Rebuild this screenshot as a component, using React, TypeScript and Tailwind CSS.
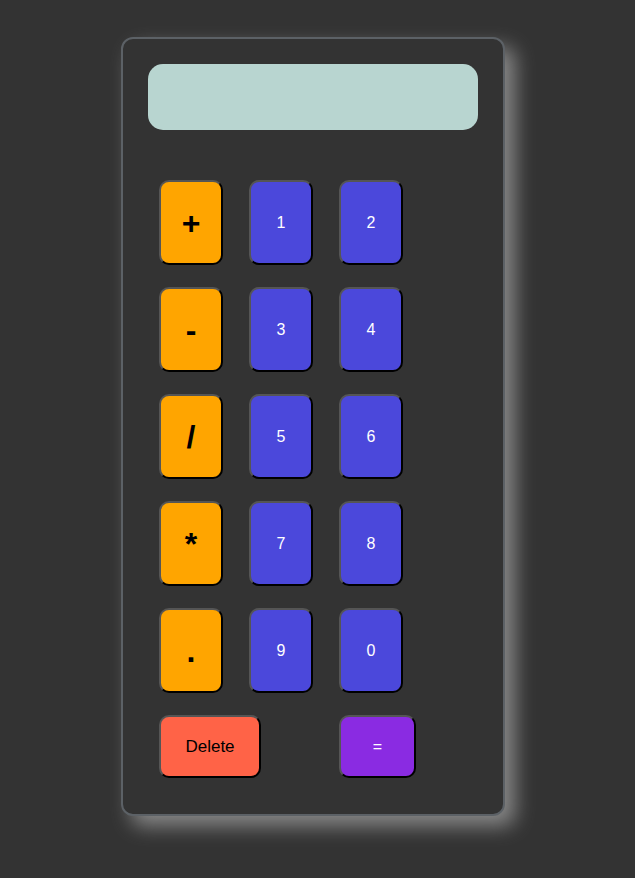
import React from "react";

const ops = ["+", "-", "/", "*", "."];
const nums = [["1", "2"], ["3", "4"], ["5", "6"], ["7", "8"], ["9", "0"]];

const btnBase =
  "rounded-[10px] border-2 border-solid border-t-[#555] border-l-[#555] border-b-black border-r-black flex items-center justify-center";

export default function App() {
  return (
    <div
      className="min-h-[878px] w-full bg-[#333333] pt-[37px] pl-[121px]"
      style={{ fontFamily: '"Liberation Sans", Arial, sans-serif' }}
    >
      <div className="w-[384px] h-[779px] rounded-[12px] border-2 border-[#5c6166] bg-[#333333] p-[25px] shadow-[10px_10px_20px_#888]">
        <div className="h-[66px] w-full rounded-[15px] bg-[#b8d5d0]" />
        <div className="mt-[50px] pl-[11px] flex flex-col gap-[22px]">
          {ops.map((op, i) => (
            <div key={op} className="flex gap-[26px]">
              <div className={`${btnBase} w-[64px] h-[85px] bg-[#ffa500] text-black text-[32px] font-bold`}>
                {op}
              </div>
              {nums[i].map((n) => (
                <div
                  key={n}
                  className={`${btnBase} w-[64px] h-[85px] bg-[#4b48db] text-white text-[16px]`}
                >
                  {n}
                </div>
              ))}
            </div>
          ))}
          <div className="flex">
            <div className={`${btnBase} w-[102px] h-[63px] bg-[#ff6347] text-black text-[17px]`}>
              Delete
            </div>
            <div className={`${btnBase} ml-[78px] w-[77px] h-[63px] bg-[#8a2be2] text-white text-[16px]`}>
              =
            </div>
          </div>
        </div>
      </div>
    </div>
  );
}
